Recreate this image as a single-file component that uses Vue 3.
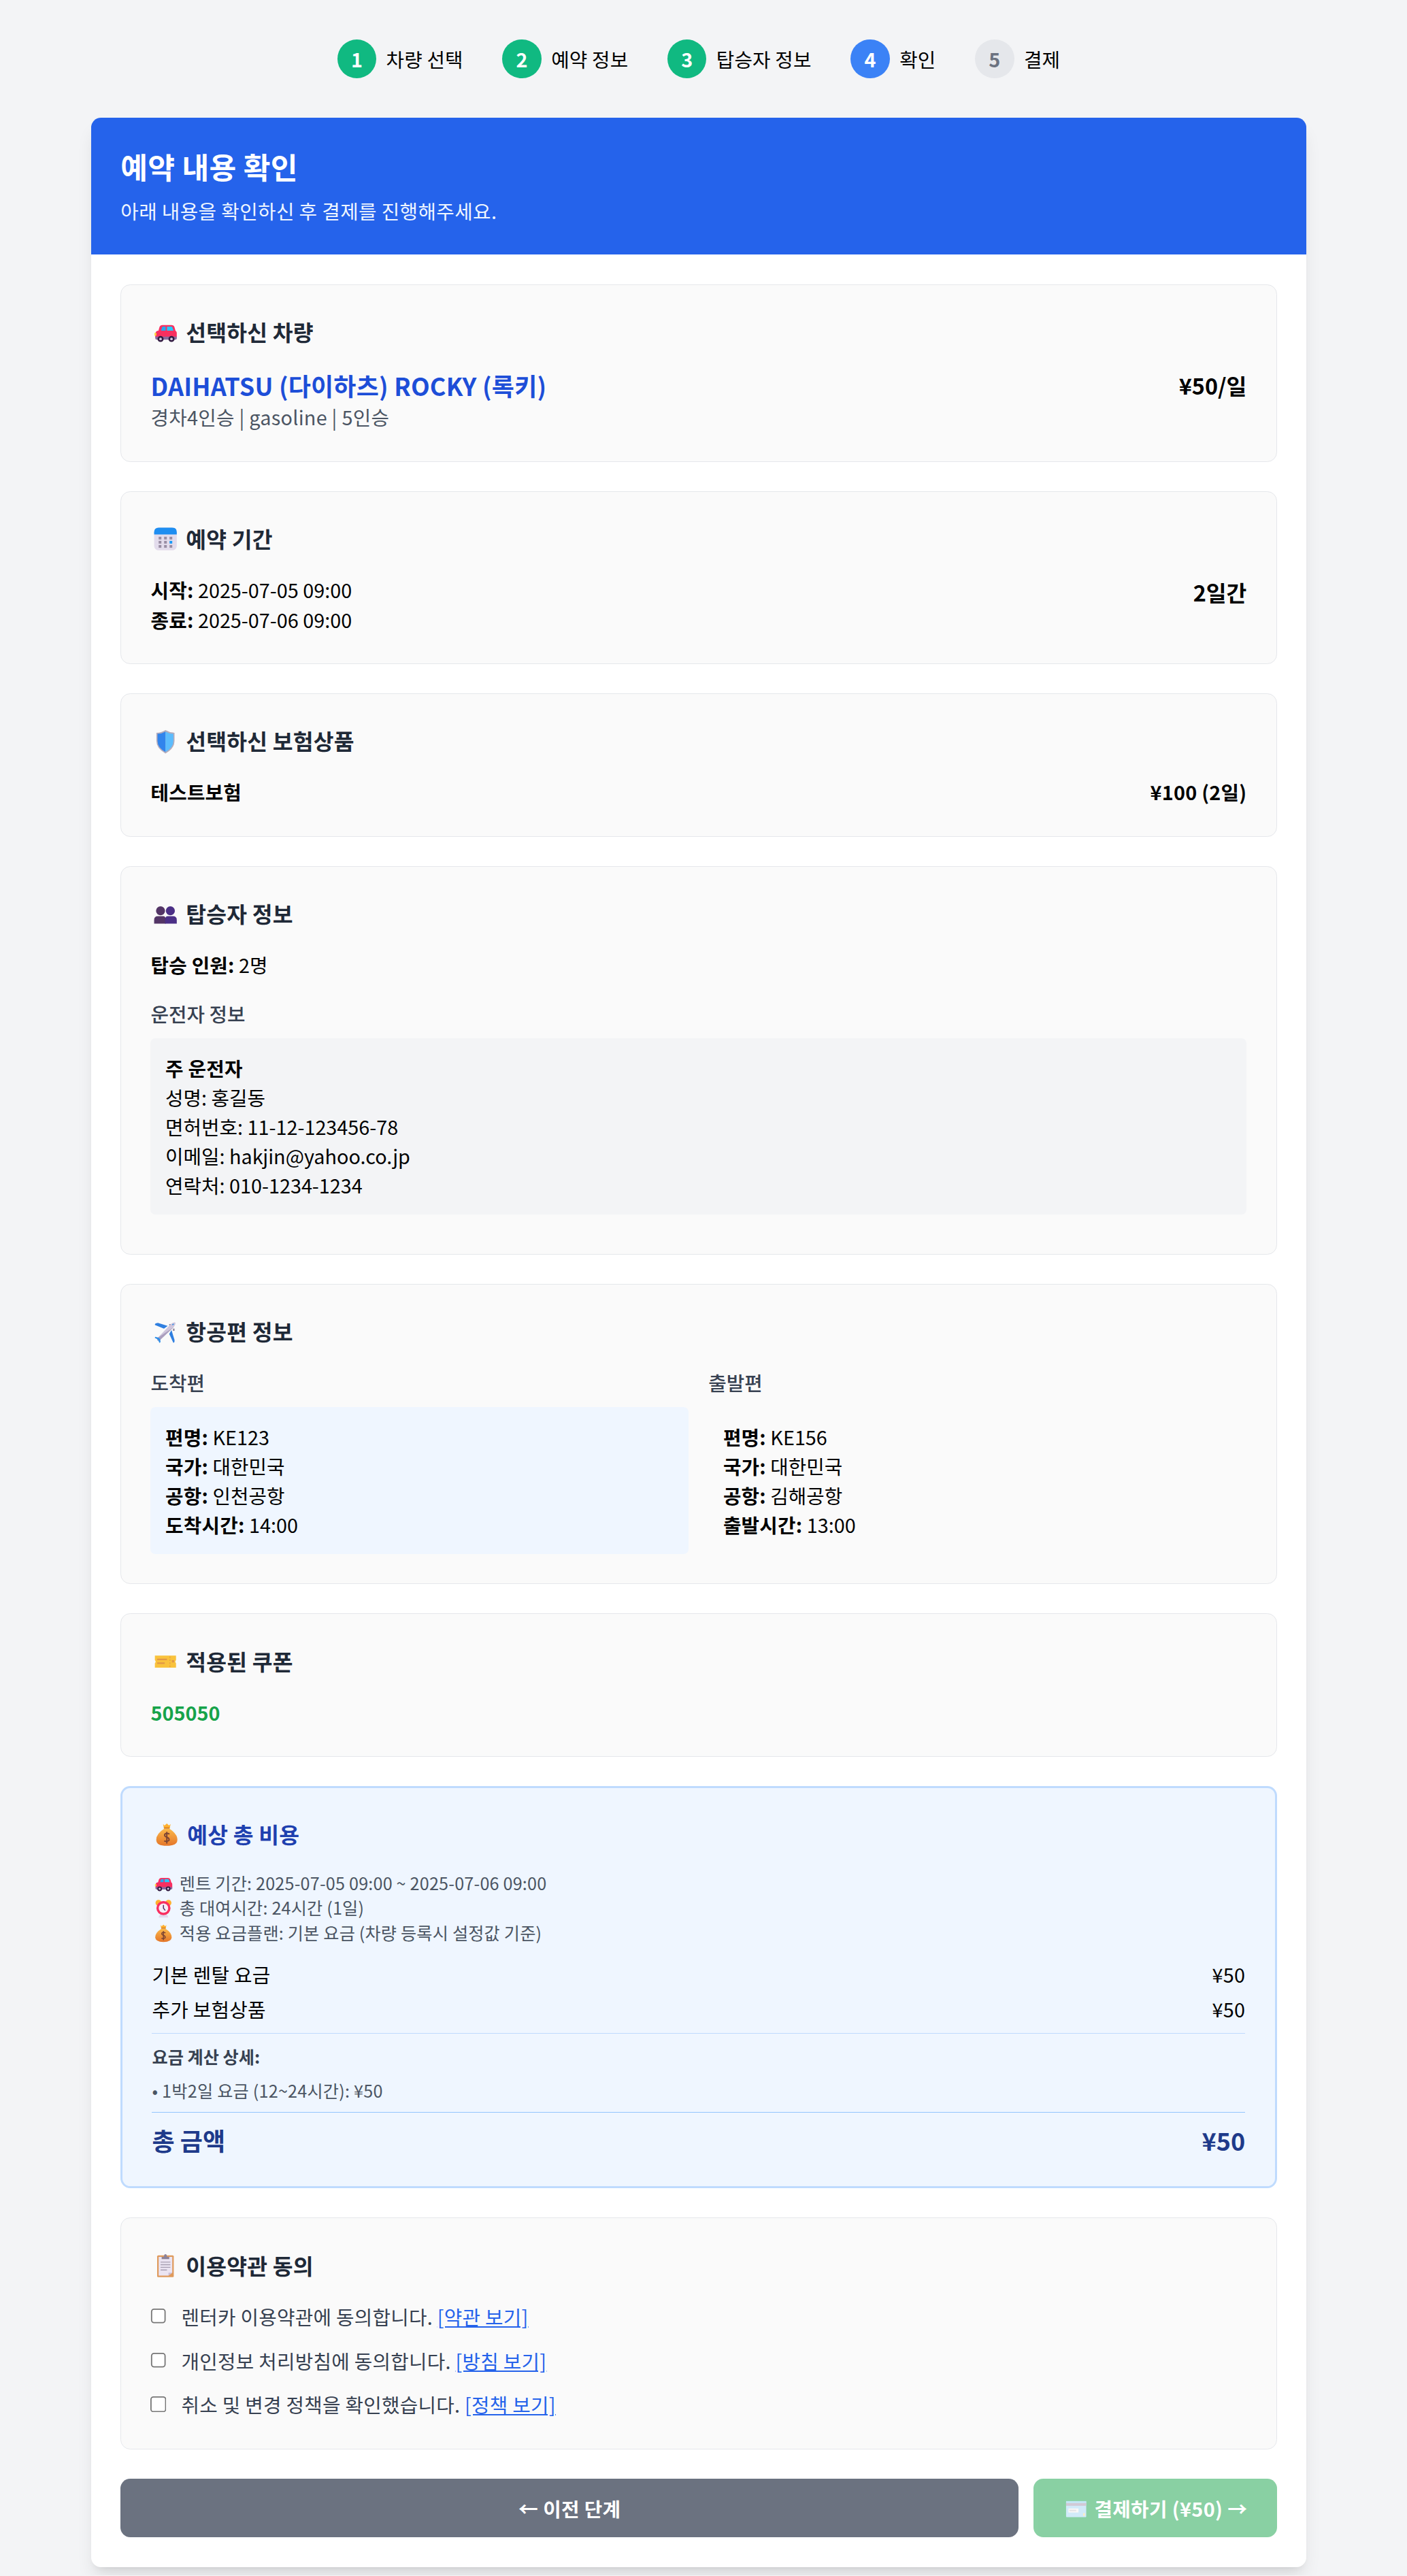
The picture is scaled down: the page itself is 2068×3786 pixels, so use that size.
<script setup>
const steps = [
  { n: 1, label: '차량 선택', state: 'done' },
  { n: 2, label: '예약 정보', state: 'done' },
  { n: 3, label: '탑승자 정보', state: 'done' },
  { n: 4, label: '확인', state: 'active' },
  { n: 5, label: '결제', state: 'todo' }
]
const arrival = [
  ['편명:', 'KE123'],
  ['국가:', '대한민국'],
  ['공항:', '인천공항'],
  ['도착시간:', '14:00']
]
const departure = [
  ['편명:', 'KE156'],
  ['국가:', '대한민국'],
  ['공항:', '김해공항'],
  ['출발시간:', '13:00']
]
const terms = [
  ['렌터카 이용약관에 동의합니다.', '[약관 보기]'],
  ['개인정보 처리방침에 동의합니다.', '[방침 보기]'],
  ['취소 및 변경 정책을 확인했습니다.', '[정책 보기]']
]
</script>

<template>
  <div class="page">
    <svg class="defs" aria-hidden="true">
      <defs>
        <linearGradient id="bagfill" x1="0" y1="0" x2="0" y2="1">
          <stop offset="0" stop-color="#fbb84a" />
          <stop offset="1" stop-color="#e4762a" />
        </linearGradient>
        <symbol id="e-car" viewBox="-4 -4 40 40">
          <path d="M8 9.5Q9 6.5 12 6.5H24Q27 6.5 28 9.5L29.5 15H6.5Z" fill="#f92f60" />
          <path d="M10.2 14 11.5 9.6Q11.9 8.6 13 8.6H16.2V14Z" fill="#26a9f0" />
          <path d="M18 8.6H23.5Q24.8 8.6 25.2 9.6L26.6 14H18Z" fill="#26c9fc" />
          <path d="M2.5 19Q2.5 14 7 14H28Q31 14 31 17.5V23H2.5Z" fill="#f92f60" />
          <rect x="1.5" y="17" width="2.5" height="3.6" fill="#ffd43a" />
          <path d="M2.5 22H31V24.5Q31 26 29 26H4.5Q2.5 26 2.5 24Z" fill="#8a6a9e" />
          <circle cx="9.5" cy="25" r="4" fill="#321b41" />
          <circle cx="9.5" cy="25" r="1.7" fill="#d3c8e0" />
          <circle cx="24" cy="25" r="4" fill="#321b41" />
          <circle cx="24" cy="25" r="1.7" fill="#d3c8e0" />
        </symbol>
        <symbol id="e-cal" viewBox="-4 -4 40 40">
          <rect x="1" y="1" width="30" height="30" rx="6" fill="#e3dcec" />
          <path d="M1 10V7Q1 1 7 1H25Q31 1 31 7V10Z" fill="#1f8ef1" />
          <g fill="#998ea4">
            <rect x="7" y="13" width="3.6" height="3.6" /><rect x="14.200" y="13" width="3.6" height="3.6" /><rect x="21.400" y="13" width="3.6" height="3.6" />
            <rect x="7" y="18.500" width="3.6" height="3.6" /><rect x="14.200" y="18.500" width="3.6" height="3.6" />
            <rect x="7" y="24" width="3.6" height="3.6" /><rect x="14.200" y="24" width="3.6" height="3.6" /><rect x="21.400" y="24" width="3.6" height="3.6" />
          </g>
          <rect x="21.400" y="18.500" width="3.6" height="3.6" fill="#1c9cf8" />
        </symbol>
        <symbol id="e-shield" viewBox="-4 -4 40 40">
          <path d="M16 0.500Q22 4 28 4V15Q28 25 16 31.500Q4 25 4 15V4Q10 4 16 0.500Z" fill="#b4acbc" />
          <path d="M16 2.500V29.500Q5.500 24 5.500 15V5.500Q11 5.500 16 2.500Z" fill="#3184ec" />
          <path d="M16 2.500V29.500Q26.500 24 26.500 15V5.500Q21 5.500 16 2.500Z" fill="#5cbcfd" />
        </symbol>
        <symbol id="e-people" viewBox="-4 -4 40 40">
          <g fill="#533566">
            <circle cx="9.500" cy="11" r="6" /><path d="M1 28V23Q1 18 6 18H13Q16.500 18 16.500 23V28Z" />
          </g>
          <g fill="#4b2f86">
            <circle cx="22.500" cy="11" r="6" /><path d="M15.500 28V23Q15.500 18 19 18H26Q31 18 31 23V28Z" />
          </g>
        </symbol>
        <symbol id="e-plane" viewBox="-4 -4 40 40">
          <path d="M14 11 3 6.500Q1 6 3 4L6 3.500 19 7.500Z" fill="#2f7fe0" />
          <path d="M21 18 26 29Q26.500 31 28 28.500L28 26 24 13Z" fill="#2f7fe0" />
          <rect x="21" y="5" width="3" height="2" fill="#8c8298" />
          <rect x="26" y="11" width="2" height="3" fill="#8c8298" />
          <path d="M6 23 23 5Q27 2 29 3Q30 5 27 9L9 26Q7 28 5 26.500 4.500 24.500 6 23Z" fill="#cfc6dc" />
          <path d="M6 23 27 9 9 26Q7 28 5 26.500 4.500 24.500 6 23Z" fill="#ab9fbe" />
          <path d="M7 23 2.500 22 1.800 23.200 6 25.500 8 30 9.500 29 9 25Z" fill="#2f8fe8" />
          <path d="M25 6 27 5" stroke="#2f8fe8" stroke-width="1.300" />
        </symbol>
        <symbol id="e-ticket" viewBox="-4 -4 40 40">
          <path d="M2 8H30V14Q28 16 30 18V24H2V18Q4 16 2 14Z" fill="#f9c23c" />
          <rect x="5" y="12" width="13" height="2" fill="#e19747" />
          <rect x="5" y="17" width="10" height="2" fill="#e19747" />
          <path d="M22 9V23" stroke="#e19747" stroke-width="1" stroke-dasharray="2 2" />
          <rect x="24.500" y="14" width="3" height="3" fill="#e19747" />
        </symbol>
        <symbol id="e-bag" viewBox="-4 -4 40 40">
          <path d="M11 2 13 4 16 1.500 19 4 21 2 20 7H12Z" fill="#ffb02e" />
          <rect x="12" y="6.500" width="8" height="2" rx="1" fill="#d67d20" />
          <path d="M12.500 8.500H19.500Q30 15 30 23Q30 31 16 31Q2 31 2 23Q2 15 12.500 8.500Z" fill="url(#bagfill)" />
          <path d="M19.500 15.500Q16 13.500 13.500 15.500 12 18 15.500 19.500 20 21 18.800 24 16 26 12.500 24.500M16 12.500V28" fill="none" stroke="#7d4533" stroke-width="1.800" />
        </symbol>
        <symbol id="e-clock" viewBox="-4 -4 40 40">
          <circle cx="7.500" cy="6" r="5" fill="#ffb02e" />
          <circle cx="24.500" cy="6" r="5" fill="#ffb02e" />
          <path d="M8 31Q8 25 16 25Q24 25 24 31Z" fill="#e1d8ec" />
          <circle cx="16" cy="15" r="12" fill="#f92f60" />
          <circle cx="16" cy="15" r="8" fill="#f6eef8" />
          <path d="M16 9.500V15L19 19" fill="none" stroke="#533566" stroke-width="1.800" />
        </symbol>
        <symbol id="e-clip" viewBox="-4 -4 40 40">
          <rect x="5" y="2" width="22" height="29" rx="1.500" fill="#df9a5c" />
          <path d="M7 4H25V25L20 29H7Z" fill="#ebe4f2" />
          <path d="M20 29V25H25Z" fill="#c9bcd6" />
          <path d="M9.500 11H22.500M9.500 14.500H22.500M9.500 18H22.500M9.500 21.500H18" stroke="#a89fb2" stroke-width="1.200" />
          <path d="M11 7V4H14Q14 0.500 16 0.500 18 0.500 18 4H21V7Z" fill="#8c8298" />
        </symbol>
        <symbol id="e-card" viewBox="-4 -4 40 40">
          <rect x="1" y="4" width="30" height="24" rx="1" fill="#a4d6f5" />
          <rect x="1" y="4" width="30" height="3" fill="#86d0ee" />
          <rect x="1" y="7" width="30" height="4" fill="#a594ac" />
          <rect x="4.500" y="15" width="15" height="6" fill="#f4f0f0" />
          <rect x="6" y="17" width="10" height="2" fill="#c9c4ca" />
          <rect x="26.500" y="22" width="2.500" height="4" fill="#ffd98a" />
        </symbol>
      </defs>
    </svg>

    <ol class="steps">
      <li v-for="s in steps" :key="s.n" class="step">
        <span class="dot" :class="s.state">{{ s.n }}</span>
        <span class="step-label">{{ s.label }}</span>
      </li>
    </ol>

    <main class="card">
      <header class="hero">
        <h1>예약 내용 확인</h1>
        <p>아래 내용을 확인하신 후 결제를 진행해주세요.</p>
      </header>

      <div class="body">
        <section class="box">
          <h3 class="title"><svg class="emoji"><use href="#e-car" /></svg> 선택하신 차량</h3>
          <div class="between">
            <div>
              <div class="car-name">DAIHATSU (다이하츠) ROCKY (록키)</div>
              <div class="car-sub">경차4인승 | gasoline | 5인승</div>
            </div>
            <div class="strong-lg">¥50/일</div>
          </div>
        </section>

        <section class="box">
          <h3 class="title"><svg class="emoji"><use href="#e-cal" /></svg> 예약 기간</h3>
          <div class="between">
            <div>
              <div><b>시작:</b> 2025-07-05 09:00</div>
              <div><b>종료:</b> 2025-07-06 09:00</div>
            </div>
            <div class="strong-lg">2일간</div>
          </div>
        </section>

        <section class="box">
          <h3 class="title"><svg class="emoji"><use href="#e-shield" /></svg> 선택하신 보험상품</h3>
          <div class="between">
            <b>테스트보험</b>
            <b>¥100 (2일)</b>
          </div>
        </section>

        <section class="box">
          <h3 class="title"><svg class="emoji"><use href="#e-people" /></svg> 탑승자 정보</h3>
          <div class="riders"><b>탑승 인원:</b> 2명</div>
          <h4 class="sub-title">운전자 정보</h4>
          <div class="driver">
            <b>주 운전자</b>
            <div>성명: 홍길동</div>
            <div>면허번호: 11-12-123456-78</div>
            <div>이메일: hakjin@yahoo.co.jp</div>
            <div>연락처: 010-1234-1234</div>
          </div>
        </section>

        <section class="box">
          <h3 class="title"><svg class="emoji"><use href="#e-plane" /></svg> 항공편 정보</h3>
          <div class="flights">
            <div>
              <h4 class="sub-title">도착편</h4>
              <div class="flight arrival">
                <div v-for="row in arrival" :key="row[0]"><b>{{ row[0] }}</b> {{ row[1] }}</div>
              </div>
            </div>
            <div>
              <h4 class="sub-title">출발편</h4>
              <div class="flight">
                <div v-for="row in departure" :key="row[0]"><b>{{ row[0] }}</b> {{ row[1] }}</div>
              </div>
            </div>
          </div>
        </section>

        <section class="box">
          <h3 class="title"><svg class="emoji"><use href="#e-ticket" /></svg> 적용된 쿠폰</h3>
          <div class="coupon">505050</div>
        </section>

        <section class="box cost">
          <h3 class="title cost-title"><svg class="emoji"><use href="#e-bag" /></svg> 예상 총 비용</h3>
          <div class="notes">
            <div><svg class="emoji"><use href="#e-car" /></svg> 렌트 기간: 2025-07-05 09:00 ~ 2025-07-06 09:00</div>
            <div><svg class="emoji"><use href="#e-clock" /></svg> 총 대여시간: 24시간 (1일)</div>
            <div><svg class="emoji"><use href="#e-bag" /></svg> 적용 요금플랜: 기본 요금 (차량 등록시 설정값 기준)</div>
          </div>
          <div class="between fee"><span>기본 렌탈 요금</span><span>¥50</span></div>
          <div class="between fee fee-next"><span>추가 보험상품</span><span>¥50</span></div>
          <div class="calc">
            <div class="calc-title">요금 계산 상세:</div>
            <div class="calc-line">• 1박2일 요금 (12~24시간): ¥50</div>
          </div>
          <div class="between total"><span>총 금액</span><span>¥50</span></div>
        </section>

        <section class="box">
          <h3 class="title"><svg class="emoji"><use href="#e-clip" /></svg> 이용약관 동의</h3>
          <label v-for="t in terms" :key="t[1]" class="term">
            <input type="checkbox" />
            <span>{{ t[0] }} <a href="#" @click.prevent>{{ t[1] }}</a></span>
          </label>
        </section>

        <div class="actions">
          <button class="btn prev" type="button">← 이전 단계</button>
          <button class="btn pay" type="button" disabled><svg class="emoji"><use href="#e-card" /></svg> 결제하기 (¥50) →</button>
        </div>
      </div>
    </main>
  </div>
</template>

<style>
html, body {
  margin: 0;
  background: #f3f4f6;
}
</style>

<style scoped>
* { box-sizing: border-box; }
.page {
  zoom: 1.8;
  width: 1141px;
  padding: 32px 0 7px;
  font-family: "Noto Sans CJK KR", "Noto Sans", sans-serif;
  font-size: 16px;
  line-height: 24px;
  color: #000;
}
.defs { position: absolute; width: 0; height: 0; overflow: hidden; }
h1, h3, h4, p, ol { margin: 0; padding: 0; }
b { font-weight: 700; letter-spacing: .12px; }
.emoji {
  display: inline-block;
  width: 1.37em;
  height: 1.37em;
  margin-top: -0.4em;
  vertical-align: -0.3em;
}
.steps {
  list-style: none;
  display: flex;
  justify-content: center;
  gap: 32px;
  margin-bottom: 32px;
}
.step { display: flex; align-items: center; gap: 8px; }
.dot {
  width: 32px;
  height: 32px;
  border-radius: 50%;
  display: flex;
  align-items: center;
  justify-content: center;
  font-weight: 700;
  color: #fff;
}
.dot.done { background: #10b981; }
.dot.active { background: #3b82f6; }
.dot.todo { background: #e5e7eb; color: #6b7280; }
.step-label { font-weight: 400; letter-spacing: .07px; }
.card {
  width: 992px;
  margin: 0 auto;
  background: #fff;
  border-radius: 8px;
  overflow: hidden;
  box-shadow: 0 10px 15px -3px rgba(0,0,0,.1), 0 4px 6px -4px rgba(0,0,0,.1);
}
.hero { background: #2563eb; color: #fff; padding: 24px; }
.hero h1 { font-size: 24px; line-height: 32px; font-weight: 700; margin-bottom: 8px; letter-spacing: .17px; }
.hero p { color: #eff6ff; letter-spacing: .21px; }
.body { padding: 24px; display: flex; flex-direction: column; gap: 24px; }
.box {
  background: #fafafa;
  border: 1px solid #e5e7eb;
  border-radius: 8px;
  padding: 24px;
}
.title {
  font-size: 18px;
  line-height: 28px;
  font-weight: 700;
  color: #1f2937;
  margin-bottom: 16px;
  letter-spacing: .1px;
}
.between { display: flex; justify-content: space-between; }
.car-name { font-size: 20px; line-height: 28px; font-weight: 700; color: #1d4ed8; letter-spacing: .11px; }
.car-sub { color: #4b5563; letter-spacing: .15px; }
.strong-lg { font-size: 18px; line-height: 28px; font-weight: 700; }
.riders { margin-bottom: 16px; }
.sub-title { font-size: 16px; line-height: 24px; font-weight: 500; color: #374151; margin-bottom: 8px; }
.driver { background: #f3f4f6; border-radius: 4px; padding: 12px; margin-bottom: 8px; }
.flights { display: grid; grid-template-columns: 1fr 1fr; gap: 16px; }
.flight { padding: 12px; border-radius: 4px; }
.arrival { background: #eff6ff; }
.coupon { font-weight: 700; color: #16a34a; }
.cost { background: #eff6ff; border: 2px solid #bfdbfe; padding-top: 23px; }
.cost-title { color: #1e40af; }
.notes { font-size: 14px; line-height: 20px; color: #4b5563; margin-bottom: 12px; letter-spacing: .1px; }
.fee { letter-spacing: .15px; }
.fee-next { margin-top: 4px; }
.calc {
  margin-top: 8px;
  padding: 8px 0;
  border-top: 1px solid #bfdbfe;
  font-size: 14px;
  line-height: 20px;
}
.calc-title { font-weight: 700; color: #374151; margin-bottom: 8px; }
.calc-line { color: #4b5563; letter-spacing: .12px; }
.total {
  border-top: 1px solid #93c5fd;
  padding-top: 8px;
  font-size: 20px;
  line-height: 28px;
  font-weight: 700;
  color: #1e3a8a;
}
.term {
  display: flex;
  align-items: center;
  margin-bottom: 12px;
  color: #374151;
  letter-spacing: .15px;
}
.term:last-child { margin-bottom: 0; }
.term input { width: 13px; height: 13px; margin: 0 12px 0 0; flex: none; }
.term a { color: #2563eb; text-decoration: underline; }
.actions { display: flex; gap: 12px; }
.btn {
  border: 0;
  border-radius: 8px;
  height: 48px;
  padding: 0 24px;
  font: inherit;
  font-weight: 700;
  color: #fff;
  letter-spacing: .2px;
}
.prev { flex: 1; background: #6b7280; }
.pay { background: #16a34a; opacity: .5; }
</style>
